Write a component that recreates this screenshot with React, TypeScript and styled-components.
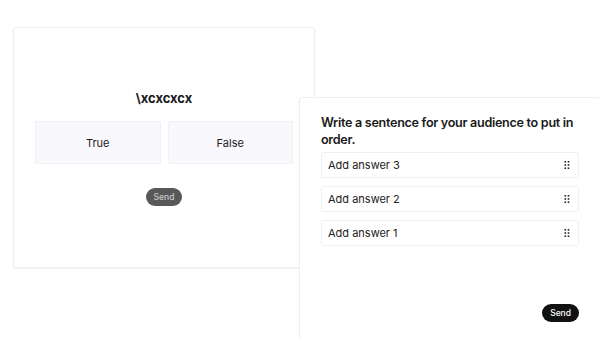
import styled, { createGlobalStyle } from "styled-components";

const GlobalStyle = createGlobalStyle`
  html, body {
    margin: 0;
    padding: 0;
    background: #ffffff;
    font-family: Inter, "Noto Sans", "Liberation Sans", sans-serif;
  }
`;

const Canvas = styled.div`
  position: relative;
  width: 600px;
  height: 338px;
  overflow: hidden;
  padding: 27px 0 0 13px;
  box-sizing: border-box;
`;

const Card = styled.div`
  background: #fff;
  border: 1px solid #efefef;
  border-radius: 3px;
  box-shadow: 0 1px 2px rgba(0, 0, 0, 0.06);
  box-sizing: border-box;
`;

const QuizCard = styled(Card)`
  width: 302px;
  height: 241px;
  display: flex;
  flex-direction: column;
  align-items: center;
  padding: 62px 21px 0 21px;
`;

const QuizTitle = styled.div`
  font-size: 13px;
  font-weight: 700;
  color: #1a1a1a;
  line-height: 16px;
`;

const Choices = styled.div`
  display: grid;
  grid-template-columns: 1fr 1fr;
  gap: 7px;
  width: 100%;
  margin-top: 15px;
`;

const Choice = styled.div`
  height: 41px;
  background: #f8f8fd;
  border: 1px solid #f0f0f5;
  border-radius: 2px;
  display: flex;
  align-items: center;
  justify-content: center;
  font-size: 11px;
  color: #222;
`;

const SendButton = styled.button<{ $dark?: boolean }>`
  height: 18px;
  padding: 0 8px;
  border: none;
  border-radius: 9px;
  font-family: inherit;
  font-size: 8.5px;
  font-weight: 500;
  line-height: 18px;
  background: ${(p) => (p.$dark ? "#111111" : "#585858")};
  color: ${(p) => (p.$dark ? "#ffffff" : "#c8c8c8")};
  cursor: pointer;
`;

const QuizSend = styled(SendButton)`
  margin-top: 24px;
`;

const OrderCard = styled(Card)`
  position: absolute;
  left: 299px;
  top: 97px;
  width: 302px;
  height: 242px;
  display: flex;
  flex-direction: column;
  padding: 16px 21px 16px 21px;
`;

const OrderTitle = styled.div`
  font-size: 12.6px;
  font-weight: 600;
  letter-spacing: -0.3px;
  color: #1a1a1a;
  line-height: 17px;
  margin: 0 -6px 4px 0;
`;

const Answers = styled.div`
  display: flex;
  flex-direction: column;
  gap: 8px;
`;

const AnswerRow = styled.div`
  height: 26px;
  border: 1px solid #f0f0f0;
  border-radius: 2px;
  display: flex;
  align-items: center;
  justify-content: space-between;
  padding: 0 8px 0 6px;
  box-sizing: border-box;
  font-size: 11px;
  color: #222;
`;

const Footer = styled.div`
  margin-top: auto;
  display: flex;
  justify-content: flex-end;
`;

const DragHandle = () => (
  <svg width="6" height="8" viewBox="0 0 6 8" fill="#222">
    <rect x="0.5" y="0" width="1.6" height="1.6" />
    <rect x="3.7" y="0" width="1.6" height="1.6" />
    <rect x="0.5" y="3.2" width="1.6" height="1.6" />
    <rect x="3.7" y="3.2" width="1.6" height="1.6" />
    <rect x="0.5" y="6.4" width="1.6" height="1.6" />
    <rect x="3.7" y="6.4" width="1.6" height="1.6" />
  </svg>
);

const answers = ["Add answer 3", "Add answer 2", "Add answer 1"];

export default function App() {
  return (
    <>
      <GlobalStyle />
      <Canvas>
        <QuizCard>
          <QuizTitle>\xcxcxcx</QuizTitle>
          <Choices>
            <Choice>True</Choice>
            <Choice>False</Choice>
          </Choices>
          <QuizSend>Send</QuizSend>
        </QuizCard>
        <OrderCard>
          <OrderTitle>Write a sentence for your audience to put in order.</OrderTitle>
          <Answers>
            {answers.map((a) => (
              <AnswerRow key={a}>
                {a}
                <DragHandle />
              </AnswerRow>
            ))}
          </Answers>
          <Footer>
            <SendButton $dark>Send</SendButton>
          </Footer>
        </OrderCard>
      </Canvas>
    </>
  );
}
